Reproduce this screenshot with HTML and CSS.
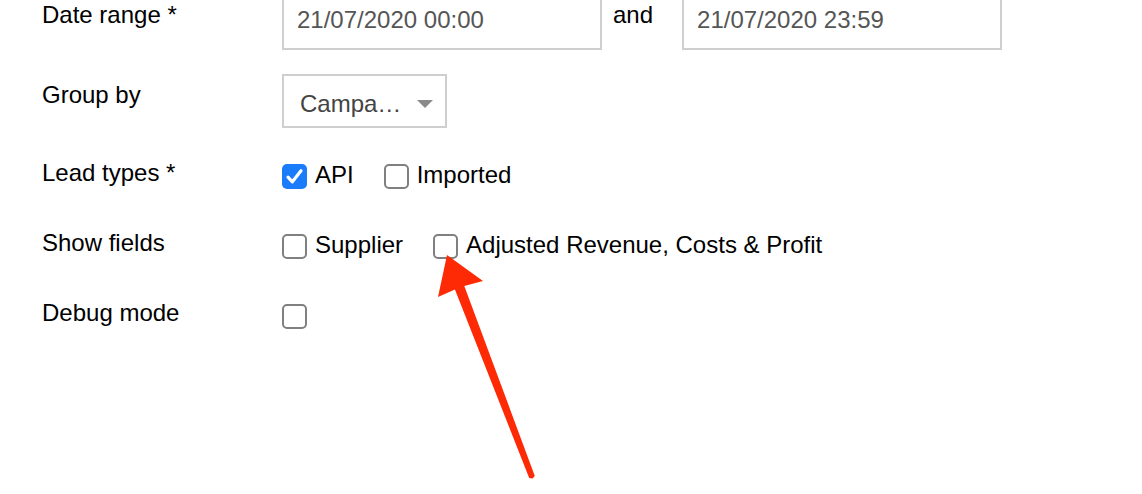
FILE: index.html
```html
<!DOCTYPE html>
<html>
<head>
<meta charset="utf-8">
<link rel="stylesheet" href="styles.css">
</head>
<body>
<form class="form">
  <div class="row row-date">
    <div class="label">Date range *</div>
    <div class="controls">
      <input class="text-input" type="text" value="21/07/2020 00:00">
      <span class="and">and</span>
      <input class="text-input" type="text" value="21/07/2020 23:59">
    </div>
  </div>
  <div class="row row-group">
    <div class="label">Group by</div>
    <div class="controls">
      <div class="select"><span class="select-text">Campa…</span><span class="caret"></span></div>
    </div>
  </div>
  <div class="row row-check row-lead">
    <div class="label">Lead types *</div>
    <div class="controls options">
      <label class="option"><span class="box checked"><svg width="25" height="25" viewBox="0 0 25 25"><path d="M6 13.2 L10.4 17.8 L19 6.8" fill="none" stroke="#fff" stroke-width="3.2" stroke-linecap="round" stroke-linejoin="round"/></svg></span><span class="opt-text">API</span></label>
      <label class="option"><span class="box"></span><span class="opt-text">Imported</span></label>
    </div>
  </div>
  <div class="row row-check">
    <div class="label">Show fields</div>
    <div class="controls options">
      <label class="option"><span class="box"></span><span class="opt-text">Supplier</span></label>
      <label class="option"><span class="box"></span><span class="opt-text">Adjusted Revenue, Costs &amp; Profit</span></label>
    </div>
  </div>
  <div class="row row-check">
    <div class="label">Debug mode</div>
    <div class="controls options">
      <label class="option"><span class="box"></span></label>
    </div>
  </div>
</form>
<svg class="arrow" width="1142" height="494" viewBox="0 0 1142 494">
  <polygon points="447,255 483,281 464.3,285.9 534.8,475.9 532.5,478.6 529.2,478.1 454.9,289.5 438,297" fill="#fe2a06"/>
</svg>
</body>
</html>
```

FILE: styles.css
```css
html, body {
  margin: 0;
  padding: 0;
  background: #fff;
}
body {
  font-family: "Liberation Sans", Arial, Helvetica, sans-serif;
  font-size: 24px;
  color: #000;
  position: relative;
  width: 1142px;
  height: 494px;
  overflow: hidden;
}
.form {
  display: flex;
  flex-direction: column;
  padding-left: 42px;
  margin: -4px 0 0 0;
}
.row {
  display: flex;
  align-items: flex-start;
}
.label {
  width: 240px;
  flex: none;
  line-height: 28px;
  color: #000;
}
.controls {
  display: flex;
  align-items: flex-start;
}
.row-date .label {
  padding-top: 5px;
}
.text-input {
  box-sizing: border-box;
  width: 320px;
  height: 54px;
  border: 2px solid #cfcfcf;
  border-radius: 0;
  padding: 0 12px 6px 13px;
  margin: 0;
  font-family: inherit;
  font-size: 24px;
  color: #555;
  background: #fff;
  outline: none;
}
.and {
  line-height: 28px;
  padding-top: 5px;
  margin: 0 29px 0 11px;
}
.row-group {
  margin-top: 24px;
}
.row-group .label {
  padding-top: 7px;
}
.select {
  box-sizing: border-box;
  width: 165px;
  height: 54px;
  border: 2px solid #cfcfcf;
  display: flex;
  align-items: flex-start;
  padding: 14px 0 0 16px;
  color: #444;
  line-height: 28px;
}
.select-text {
  flex: 1;
}
.caret {
  width: 0;
  height: 0;
  border-left: 8px solid transparent;
  border-right: 8px solid transparent;
  border-top: 8px solid #8a8a8a;
  margin: 10px 12px 0 0;
}
.row-lead {
  margin-top: 31px;
}
.row-check {
  height: 28px;
}
.row-check + .row-check {
  margin-top: 42px;
}
.options {
  gap: 30px;
  line-height: 28px;
  padding-top: 2px;
}
.option {
  display: flex;
  align-items: flex-start;
  gap: 8px;
}
.box {
  box-sizing: border-box;
  width: 25px;
  height: 25px;
  border: 2px solid #808080;
  border-radius: 5px;
  margin-top: 3px;
  flex: none;
  background: #fff;
}
.box.checked {
  border: none;
  background: #1a7cfa;
  display: block;
}
.box svg {
  display: block;
}
.arrow {
  position: absolute;
  left: 0;
  top: 0;
  pointer-events: none;
}
```
